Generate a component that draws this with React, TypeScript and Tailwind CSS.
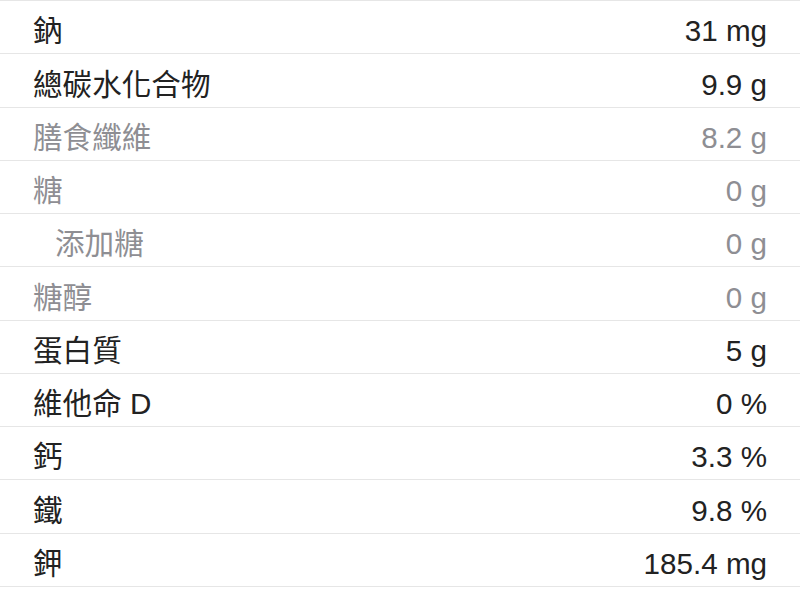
import React from "react";

type Row = { label: string; value: string; muted?: boolean; indent?: boolean };

const rows: Row[] = [
  { label: "鈉", value: "31 mg" },
  { label: "總碳水化合物", value: "9.9 g" },
  { label: "膳食纖維", value: "8.2 g", muted: true },
  { label: "糖", value: "0 g", muted: true },
  { label: "添加糖", value: "0 g", muted: true, indent: true },
  { label: "糖醇", value: "0 g", muted: true },
  { label: "蛋白質", value: "5 g" },
  { label: "維他命 D", value: "0 %" },
  { label: "鈣", value: "3.3 %" },
  { label: "鐵", value: "9.8 %" },
  { label: "鉀", value: "185.4 mg" },
];

const App: React.FC = () => {
  return (
    <div
      className="w-[800px] h-[599px] bg-white overflow-hidden"
      style={{ fontFamily: '"Liberation Sans", "Noto Sans CJK TC", sans-serif' }}
    >
      <div className="border-t border-[#e6e6e6]">
        {rows.map((r) => (
          <div
            key={r.label}
            className={`h-[53.27px] border-b border-[#e6e6e6] flex items-center justify-between pt-[8px] pr-[33px] text-[29.6px] leading-none ${
              r.muted ? "text-[#8e8e93]" : "text-[#222222]"
            } ${r.indent ? "pl-[55px]" : "pl-[33px]"}`}
          >
            <span>{r.label}</span>
            <span>{r.value}</span>
          </div>
        ))}
      </div>
    </div>
  );
};

export default App;
